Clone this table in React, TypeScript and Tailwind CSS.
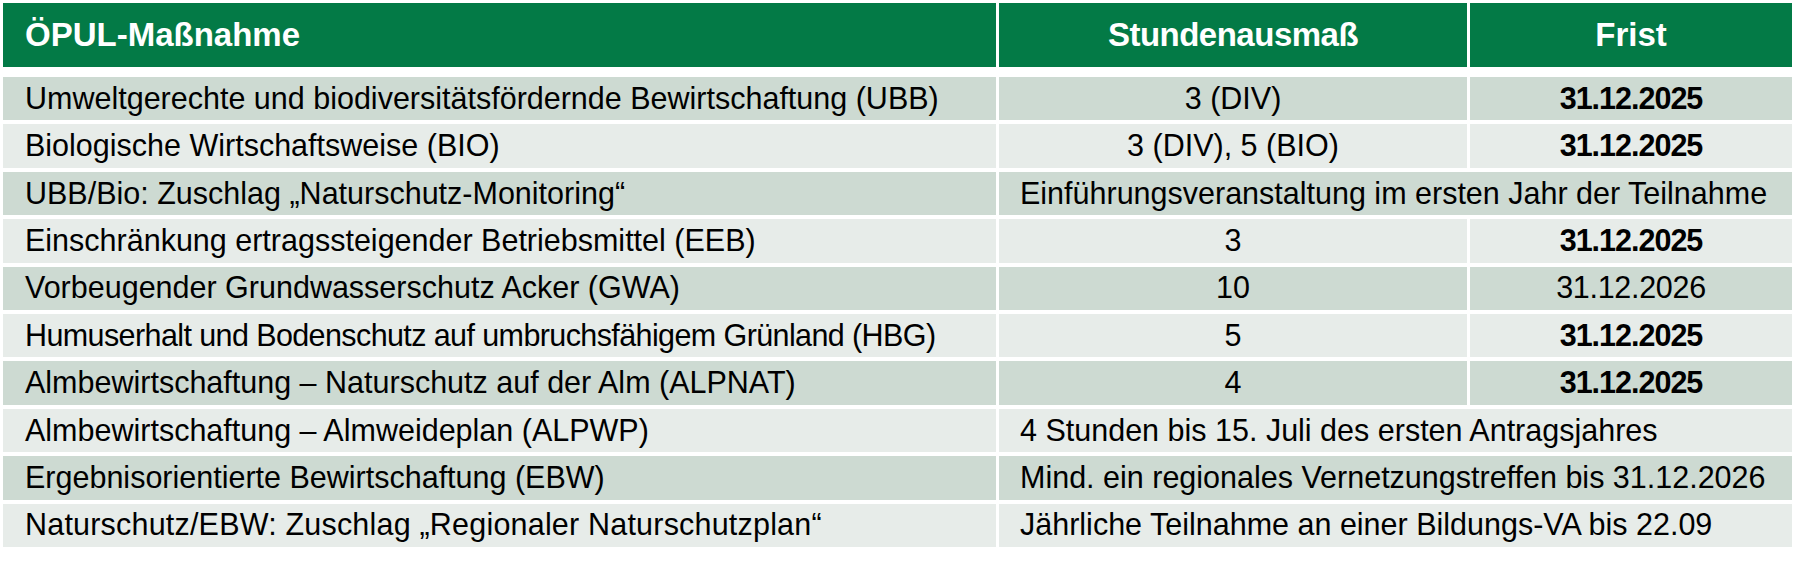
type Row = {
  name: string;
  hours?: string;
  deadline?: string;
  bold?: boolean;
  span?: string;
  track?: string;
};

const rows: Row[] = [
  { name: 'Umweltgerechte und biodiversitätsfördernde Bewirtschaftung (UBB)', hours: '3 (DIV)', deadline: '31.12.2025', bold: true },
  { name: 'Biologische Wirtschaftsweise (BIO)', hours: '3 (DIV), 5 (BIO)', deadline: '31.12.2025', bold: true },
  { name: 'UBB/Bio: Zuschlag „Naturschutz-Monitoring“', span: 'Einführungsveranstaltung im ersten Jahr der Teilnahme' },
  { name: 'Einschränkung ertragssteigender Betriebsmittel (EEB)', hours: '3', deadline: '31.12.2025', bold: true },
  { name: 'Vorbeugender Grundwasserschutz Acker (GWA)', hours: '10', deadline: '31.12.2026' },
  {
    name: 'Humuserhalt und Bodenschutz auf umbruchsfähigem Grünland (HBG)',
    hours: '5',
    deadline: '31.12.2025',
    bold: true,
    track: 'tracking-[-0.6px]',
  },
  { name: 'Almbewirtschaftung – Naturschutz auf der Alm (ALPNAT)', hours: '4', deadline: '31.12.2025', bold: true },
  { name: 'Almbewirtschaftung – Almweideplan (ALPWP)', span: '4 Stunden bis 15. Juli des ersten Antragsjahres' },
  { name: 'Ergebnisorientierte Bewirtschaftung (EBW)', span: 'Mind. ein regionales Vernetzungstreffen bis 31.12.2026' },
  {
    name: 'Naturschutz/EBW: Zuschlag „Regionaler Naturschutzplan“',
    span: 'Jährliche Teilnahme an einer Bildungs-VA bis 22.09',
    track: 'tracking-[0.2px]',
  },
];

export default function App() {
  return (
    <main className="h-[564px] w-[1800px] bg-white pl-[3px] pt-[3px] font-['Liberation_Sans',Arial,sans-serif] text-[30.5px] text-black">
      <div className="grid grid-cols-[993px_468px_322px] gap-x-[3px] text-[33px] font-bold text-white">
        <div className="flex h-[64px] items-center bg-[#037a46] pl-[22px]">ÖPUL-Maßnahme</div>
        <div className="flex h-[64px] items-center justify-center bg-[#037a46] tracking-[-0.5px]">Stundenausmaß</div>
        <div className="flex h-[64px] items-center justify-center bg-[#037a46]">Frist</div>
      </div>

      <div className="mt-[10px] grid grid-cols-[993px_468px_322px] gap-x-[3px] gap-y-[4px]">
        {rows.map((r, i) => {
          const bg = i % 2 === 0 ? 'bg-[#cddad2]' : 'bg-[#e7ece9]';
          return (
            <div key={i} className="contents">
              <div className={`flex h-[43.4px] items-center pl-[22px] ${bg} ${r.track ?? ''}`}>{r.name}</div>
              {r.span ? (
                <div className={`col-span-2 flex h-[43.4px] items-center pl-[21px] ${bg}`}>{r.span}</div>
              ) : (
                <>
                  <div className={`flex h-[43.4px] items-center justify-center ${bg}`}>{r.hours}</div>
                  <div
                    className={`flex h-[43.4px] items-center justify-center ${bg} ${
                      r.bold ? 'font-bold tracking-[-1px]' : 'tracking-[-0.3px]'
                    }`}
                  >
                    {r.deadline}
                  </div>
                </>
              )}
            </div>
          );
        })}
      </div>
    </main>
  );
}
